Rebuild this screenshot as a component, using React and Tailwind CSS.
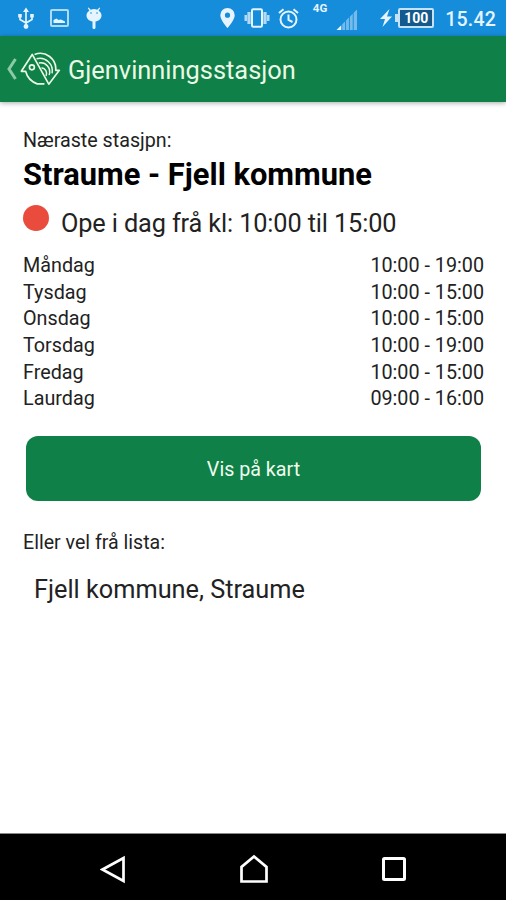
const hours = [
  { day: "Måndag", time: "10:00 - 19:00" },
  { day: "Tysdag", time: "10:00 - 15:00" },
  { day: "Onsdag", time: "10:00 - 15:00" },
  { day: "Torsdag", time: "10:00 - 19:00" },
  { day: "Fredag", time: "10:00 - 15:00" },
  { day: "Laurdag", time: "09:00 - 16:00" },
];

function UsbIcon() {
  return (
    <svg className="ml-[17px] h-6 w-[18px]" viewBox="0 0 18 24" fill="none" stroke="currentColor" strokeWidth="1.7">
      <path d="M9 4v16M3 10v3.5l6 3.5 6-3.5V10" />
      <path d="M9 1.5 12 6H6zM1.2 8h3.6v3.6H1.2zM13.2 8h3.6v3.6h-3.6z" fill="currentColor" stroke="none" />
      <circle cx="9" cy="20.5" r="2.4" fill="currentColor" stroke="none" />
    </svg>
  );
}

function ImageIcon() {
  return (
    <svg className="ml-[15px] h-[18px] w-[19px]" viewBox="0 0 19 18" fill="none">
      <rect x="1" y="1" width="17" height="16" rx="1" stroke="currentColor" strokeWidth="2" opacity=".75" />
      <path d="M3.5 14v-3l3-1.5 2 1.5 2.5-.5 4 2v1.5z" fill="currentColor" />
    </svg>
  );
}

function DebugIcon() {
  return (
    <svg className="ml-[17px] h-[22px] w-4" viewBox="0 0 16 22" fill="currentColor">
      <path d="M2.5.5 4.8 2.8a8 8 0 0 1 6.400 0L13.5.5l.7.6-1.6 2.6C14.8 5 15.5 7 15.5 8.5c0 3-2.5 5.5-6 6V20.5a1.5 1.5 0 0 1-3 0V14.5C3 14 .5 11.5.5 8.5c0-1.5.7-3.5 2.900-4.8L1.8 1.100z" />
      <circle cx="5" cy="6" r=".8" className="fill-[#168ddb]" />
      <circle cx="11" cy="6" r=".8" className="fill-[#168ddb]" />
    </svg>
  );
}

function LocationIcon() {
  return (
    <svg className="h-5 w-[15px]" viewBox="0 0 15 20" fill="currentColor">
      <path fillRule="evenodd" d="M7.5 0A7.2 7.2 0 0 0 .3 7.2C.3 12 7.5 20 7.5 20s7.2-8 7.2-12.8A7.2 7.2 0 0 0 7.5 0zm0 4.6a2.6 2.6 0 1 1 0 5.2 2.6 2.6 0 0 1 0-5.2z" />
    </svg>
  );
}

function VibrateIcon() {
  return (
    <svg className="ml-[9px] h-5 w-[26px]" viewBox="0 0 26 20" fill="none" stroke="currentColor">
      <rect x="8" y="1.2" width="10" height="17.6" rx="1.2" strokeWidth="2" />
      <path d="M5 4v12M21 4v12" strokeWidth="3.2" opacity=".75" />
      <path d="M1.8 7v6M24.2 7v6" strokeWidth="2.6" opacity=".75" />
    </svg>
  );
}

function AlarmIcon() {
  return (
    <svg className="ml-[8px] h-[21px] w-[21px]" viewBox="0 0 21 21" fill="none" stroke="currentColor" strokeWidth="2">
      <circle cx="10.5" cy="11.5" r="8" />
      <path d="M10.5 6.5v5.3l4 2.2M1 5l4.5-3.7M20 5l-4.5-3.7" />
    </svg>
  );
}

function SignalIcon() {
  return (
    <svg className="ml-[9px] mt-[2px] h-[21px] w-[22px]" viewBox="0 0 22 22" fill="currentColor">
      <path d="M0 22 5 17v5z" />
      <path d="M6 16v6h3v-9zM10 12v10h3V9zM14 8v14h3V5zM18 4v18h3.5V.5z" opacity=".45" />
    </svg>
  );
}

function StatusBar() {
  return (
    <div className="flex h-9 items-center bg-[#168ddb] text-[#e6f4ff]">
      <UsbIcon />
      <ImageIcon />
      <DebugIcon />
      <div className="ml-auto flex items-center pr-[10px]">
        <LocationIcon />
        <VibrateIcon />
        <AlarmIcon />
        <span className="ml-[14px] -mt-[18px] text-[11.5px] leading-none font-bold">4G</span>
        <SignalIcon />
        <svg className="ml-[22px] h-[18px] w-3" viewBox="0 0 12 18" fill="currentColor">
          <path d="M9.5 0 0 10h5L2.5 18 12 7.5H7z" />
        </svg>
        <div className="ml-[3px] flex items-center">
          <div className="h-2 w-[3px] bg-[#c5e2f6]" />
          <div className="flex h-5 w-[36px] items-center justify-center rounded-[2px] border-2 border-[#c5e2f6] bg-[#155a8c] text-[14px] leading-none font-bold text-white">
            100
          </div>
        </div>
        <span className="ml-[11px] mt-[3px] text-[19.5px] leading-none font-medium tracking-[0.2px]">15.42</span>
      </div>
    </div>
  );
}

function Logo() {
  return (
    <svg
      className="ml-[3px] h-[34px] w-[41px]"
      viewBox="60 36 124 102"
      fill="none"
      stroke="currentColor"
      strokeWidth="5"
      strokeLinejoin="round"
    >
      <path d="M134 132H112Q84 122 77 94H64L97 43 147 133 179 91H168A47 47 0 0 0 104 43" />
      <circle cx="96" cy="82" r="7.5" />
      <path d="M110 56A38 38 0 0 1 157 100M117 69A27 27 0 0 1 148 105M125 83A18 18 0 0 1 139 108" strokeWidth="4.5" />
    </svg>
  );
}

function AppHeader() {
  return (
    <header className="flex h-[66px] items-center bg-[#108049] text-[#eafae5] shadow-[0_1px_5px_rgba(0,0,0,0.35)]">
      <svg className="ml-[7px] h-[22px] w-[10px] text-[#8cc9a5]" viewBox="0 0 10 22" fill="none" stroke="currentColor" strokeWidth="3">
        <path d="M8.5 1 2 11l6.5 10" />
      </svg>
      <Logo />
      <h1 className="ml-[7px] mt-[4px] text-[25.4px] leading-none">Gjenvinningsstasjon</h1>
    </header>
  );
}

function NavBar() {
  return (
    <nav className="flex h-[67px] items-center justify-between border-t border-[#888] bg-black pr-[99px] pl-[100px] pt-1 text-white">
      <svg className="h-[29px] w-[26px]" viewBox="0 0 26 29" fill="none" stroke="currentColor" strokeWidth="2.7">
        <path d="M23.5 3v23L2.5 14.5z" />
      </svg>
      <svg className="h-[30px] w-[30px]" viewBox="0 0 30 30" fill="none" stroke="currentColor" strokeWidth="2.7">
        <path d="M2.5 27.5V13L15 2.5 27.5 13v14.5z" />
      </svg>
      <svg className="h-[26px] w-[26px]" viewBox="0 0 26 26" fill="none" stroke="currentColor" strokeWidth="3">
        <rect x="2.5" y="2.5" width="21" height="21" rx="1" />
      </svg>
    </nav>
  );
}

export default function App() {
  return (
    <div className="flex h-[900px] w-[506px] flex-col overflow-hidden bg-white font-['Roboto',sans-serif] text-[#222]">
      <StatusBar />
      <AppHeader />
      <main className="flex-1 px-[23px] pt-[27px]">
        <p className="text-[19.7px] leading-6">Næraste stasjpn:</p>
        <h2 className="mt-[2px] text-[30.85px] leading-10 font-bold text-black">Straume - Fjell kommune</h2>
        <div className="mt-[10px] flex h-9 items-start">
          <span className="size-[26px] rounded-full bg-[#e94b3c]" />
          <p className="ml-3 pt-[3px] text-[25.3px] leading-8 tracking-[-0.13px]">Ope i dag frå kl: 10:00 til 15:00</p>
        </div>
        <ul className="mt-[12px] -mr-[1px] text-[19.75px] leading-[26.65px]">
          {hours.map(({ day, time }) => (
            <li key={day} className="flex justify-between">
              <span>{day}</span>
              <span>{time}</span>
            </li>
          ))}
        </ul>
        <button
          type="button"
          className="mt-[23px] ml-[3px] block h-[65px] w-[455px] rounded-[12px] bg-[#108049] pt-[3px] text-[19.7px] text-[#effced]"
        >
          Vis på kart
        </button>
        <p className="mt-[30px] text-[19.6px] leading-6">Eller vel frå lista:</p>
        <p className="mt-[19px] ml-[11px] text-[25.3px] leading-8">Fjell kommune, Straume</p>
      </main>
      <NavBar />
    </div>
  );
}
